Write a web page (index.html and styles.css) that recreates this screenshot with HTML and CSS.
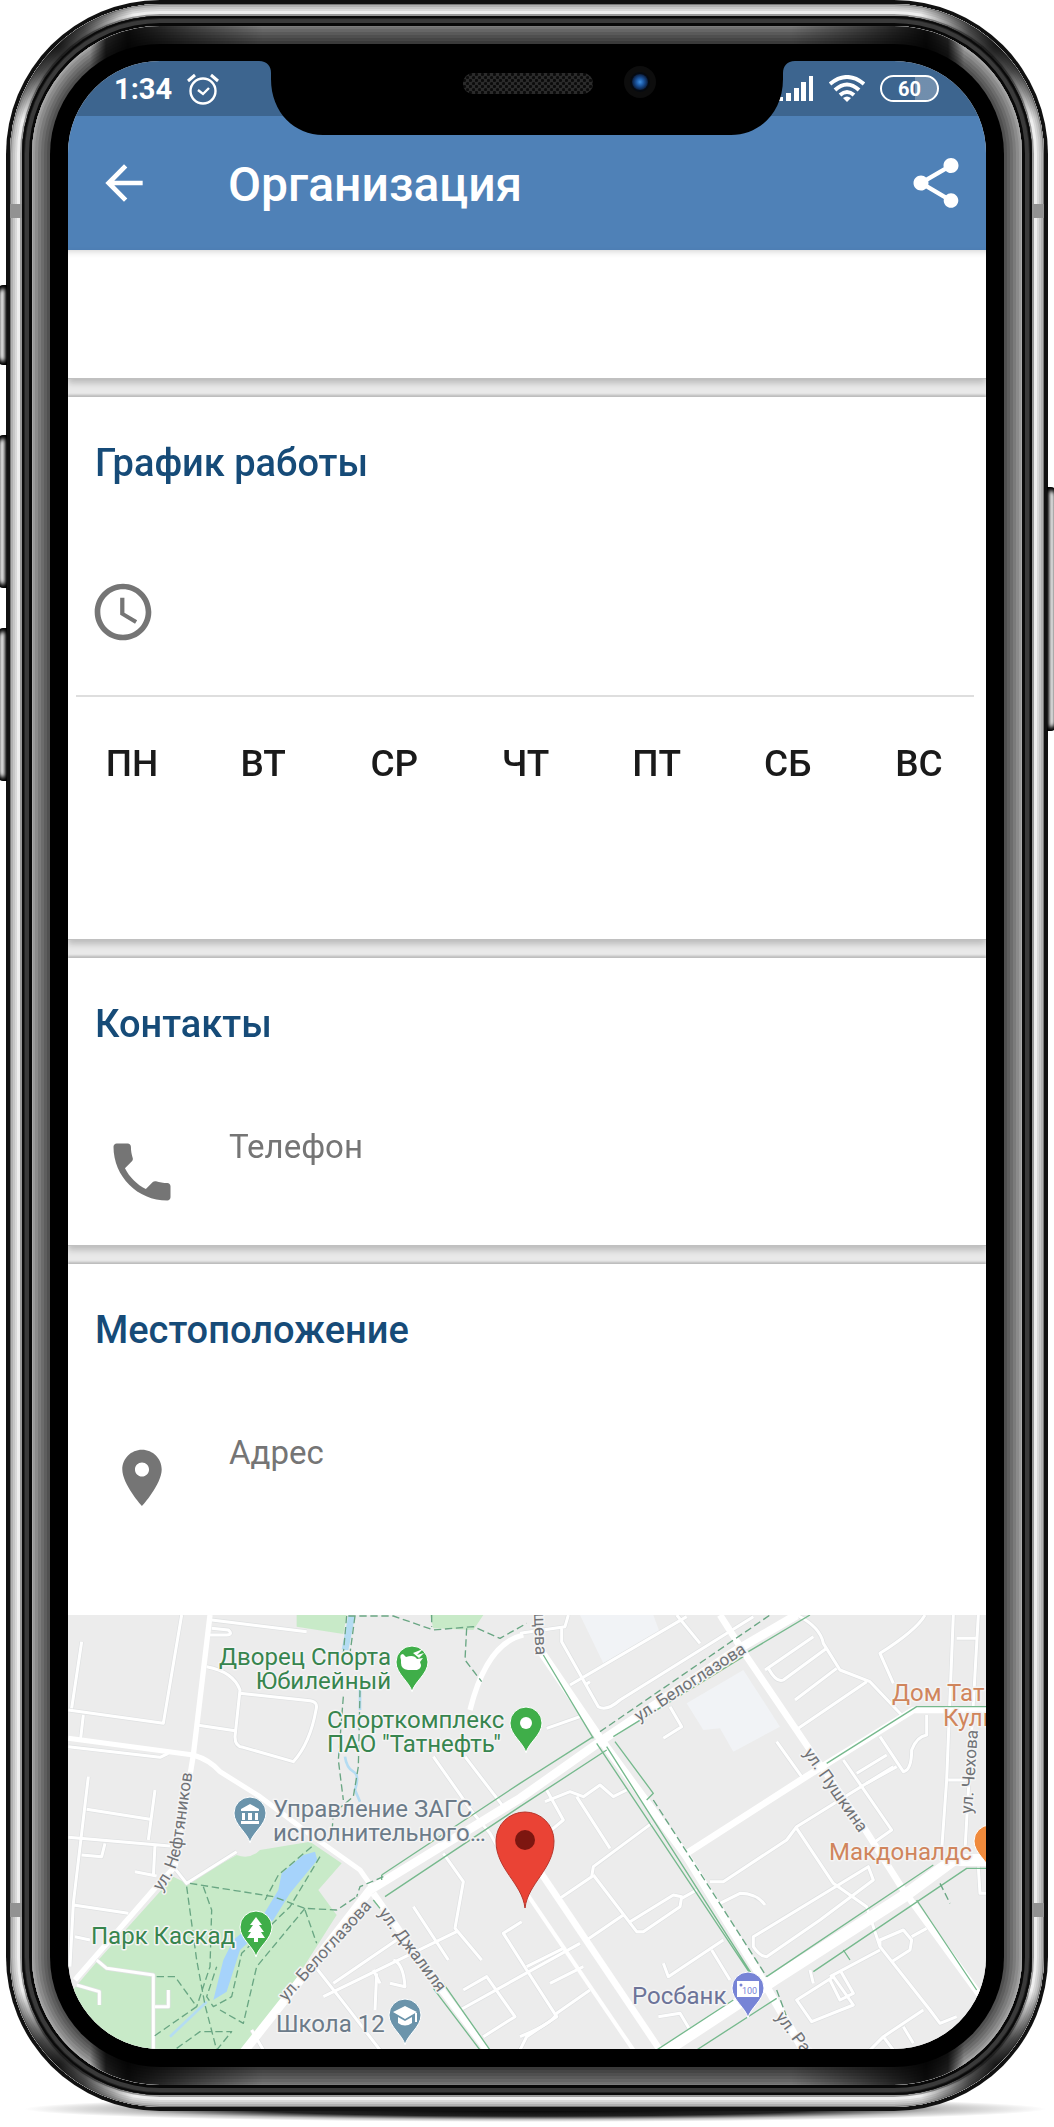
FILE: index.html
```html
<!DOCTYPE html>
<html lang="ru">
<head>
<meta charset="utf-8">
<meta name="viewport" content="width=device-width, initial-scale=1">
<title>Организация</title>
<link rel="stylesheet" href="styles.css">
</head>
<body>
<div class="stage">
  <div class="phone">
    <i class="key key-mute"></i><i class="key key-up"></i><i class="key key-down"></i><i class="key key-power"></i>
    <div class="steel">
      <i class="band band-tl"></i><i class="band band-tr"></i><i class="band band-bl"></i><i class="band band-br"></i>
      <div class="groove"><div class="rim"><div class="bezel">
        <main class="screen">
          <svg class="notch" viewBox="0 0 536 74" aria-hidden="true">
            <defs>
              <pattern id="mesh" width="6" height="6" patternUnits="userSpaceOnUse"><rect width="6" height="6" fill="#2b2b2b"/><circle cx="1.5" cy="1.5" r="1.6" fill="#0b0b0b"/><circle cx="4.500" cy="4.500" r="1.6" fill="#0b0b0b"/></pattern>
              <radialGradient id="lens"><stop offset="0" stop-color="#3f8fe0"/><stop offset=".45" stop-color="#1c58a4"/><stop offset="1" stop-color="#0a1c3c"/></radialGradient>
            </defs>
            <path d="M0 0C8 0 12 5 12 12V18C12 52 36 74 64 74H472C500 74 524 52 524 18V12C524 5 528 0 536 0Z"/>
            <rect x="204" y="12" width="130" height="21" rx="10" fill="url(#mesh)"/>
            <circle cx="381" cy="21" r="16" fill="#0d0d0d"/><circle cx="381" cy="21" r="10" fill="#050a12"/><circle cx="381" cy="21" r="8" fill="url(#lens)"/>
          </svg>
          <div class="status">
            <div class="status-side">
              <time>1:34</time>
              <svg width="32" height="32" viewBox="0 0 32 32" fill="none" stroke="#fff" aria-hidden="true"><circle cx="16" cy="18" r="12.500" stroke-width="2.400"/><path d="M11 17l5 4 6-6" stroke-width="2.400"/><path d="M1 8l7-6M31 8l-7-6" stroke-width="3"/></svg>
            </div>
            <div class="status-side">
              <svg width="36" height="26" viewBox="0 0 36 26" fill="#fff" aria-hidden="true"><path d="M0 21h5v4H0zM8 17h5v8H8zM16 12h5v13h-5zM23 6h5v19h-5zM31 0h4v25h-4z"/></svg>
              <svg width="36" height="27" viewBox="0 0 36 27" fill="none" stroke="#fff" stroke-width="4" aria-hidden="true"><path d="M1 9Q18-5 35 9M6 15Q18 4 30 15M11 20Q18 14 25 20"/><path d="M14 23Q18 20 22 23L18 27Z" fill="#fff" stroke="none"/></svg>
              <span class="battery">60</span>
            </div>
          </div>
          <header class="appbar">
            <button class="icon-btn" type="button" aria-label="Назад"><svg width="56" height="56" viewBox="0 0 24 24"><path d="M20 11H7.830l5.590-5.590L12 4l-8 8 8 8 1.410-1.410L7.830 13H20v-2z"/></svg></button>
            <h1>Организация</h1>
            <button class="icon-btn" type="button" aria-label="Поделиться"><svg width="60" height="60" viewBox="0 0 24 24"><path d="M18 16.080c-.76 0-1.440.3-1.960.77L8.910 12.700c.05-.23.09-.46.09-.7s-.04-.47-.09-.7l7.050-4.110c.54.5 1.250.81 2.040.81 1.660 0 3-1.340 3-3s-1.340-3-3-3-3 1.340-3 3c0 .24.04.47.09.7L8.040 9.810C7.500 9.310 6.790 9 6 9c-1.660 0-3 1.340-3 3s1.340 3 3 3c.79 0 1.500-.31 2.040-.81l7.120 4.160c-.05.21-.08.43-.08.65 0 1.610 1.310 2.920 2.920 2.920s2.920-1.310 2.920-2.920-1.310-2.920-2.920-2.920z"/></svg></button>
          </header>
          <section class="card summary"></section>
          <section class="card schedule">
            <h2>График работы</h2>
            <svg class="clock" width="68" height="68" viewBox="0 0 24 24" aria-hidden="true"><path d="M11.990 2C6.470 2 2 6.480 2 12s4.470 10 9.990 10C17.520 22 22 17.520 22 12S17.520 2 11.990 2zM12 20c-4.420 0-8-3.580-8-8s3.580-8 8-8 8 3.580 8 8-3.580 8-8 8zM12.500 7H11v6l5.250 3.150.75-1.230-4.500-2.670z"/></svg>
            <hr>
            <table class="days"><thead><tr><th scope="col">ПН</th><th scope="col">ВТ</th><th scope="col">СР</th><th scope="col">ЧТ</th><th scope="col">ПТ</th><th scope="col">СБ</th><th scope="col">ВС</th></tr></thead></table>
          </section>
          <section class="card">
            <h2>Контакты</h2>
            <div class="row">
              <svg width="76" height="76" viewBox="0 0 24 24" aria-hidden="true"><path d="M6.620 10.790c1.440 2.830 3.760 5.140 6.590 6.590l2.200-2.200c.27-.27.67-.36 1.020-.24 1.120.37 2.330.57 3.570.57.55 0 1 .45 1 1V20c0 .55-.45 1-1 1-9.390 0-17-7.610-17-17 0-.55.45-1 1-1h3.500c.55 0 1 .45 1 1 0 1.250.2 2.450.57 3.570.11.35.03.74-.25 1.020l-2.200 2.200z"/></svg>
              <p>Телефон</p>
            </div>
          </section>
          <section class="card location">
            <h2>Местоположение</h2>
            <div class="row">
              <svg width="76" height="76" viewBox="-1.500 -1.500 27 27" aria-hidden="true"><path d="M12 2C8.130 2 5 5.130 5 9c0 5.250 7 13 7 13s7-7.750 7-13c0-3.870-3.130-7-7-7zm0 9.500c-1.380 0-2.500-1.120-2.500-2.500s1.120-2.500 2.500-2.500 2.500 1.120 2.500 2.500-1.120 2.500-2.500 2.500z"/></svg>
              <p>Адрес</p>
            </div>
          </section>
          <svg class="map" viewBox="0 0 918 434" preserveAspectRatio="xMidYMid slice" role="img" aria-label="Карта">
            <defs>
              <path id="pin" d="M0 0C-2-10-16-18-16-30A16 16 0 1 1 16-30C16-18 2-10 0 0Z"/>
              <path id="neft" d="M93 277Q110 256 114 230L124 160"/>
              <g id="minor">
                <path d="M65 125L35 325M25 330L310 370L365 45M70 345L62 415M25 440L300 472L325 460M455 60L740 95M445 105H500Q520 103 505 90L455 85M440 200Q520 215 540 270L525 410Q525 440 550 442L700 485Q750 430 768 330Q775 305 750 302L540 280M410 375L525 392M85 530L40 910L30 1100M285 570L265 720M80 628L270 658M25 712L330 738M65 765L125 770L135 730M285 735L280 830M225 815L290 828M40 915L205 940M45 1010L90 1020M340 800L380 850L530 755M110 1080L140 1105L280 1125V1350M285 1220H325V1170M50 1155L118 1175V1215"/>
                <path d="M1120 470L1240 640L1290 700L1340 790M1215 470L1330 620M1150 760L1210 845L1185 985L1265 1080M1060 920L1165 1080M820 1150L1010 1020M790 1190L1190 995M750 1080L860 1220L960 1350M940 1110L960 1150M1000 1080Q1030 1090 1035 1160L990 1150M950 1120L945 1230M575 1290L610 1350M1385 965L1330 1000L1400 1110L1490 1250L1400 1310L1380 1350M1210 1170L1280 1130L1365 1250L1270 1310M1200 1230L1560 1030"/>
                <g transform="translate(1380 0)">
                  <path d="M0 100L135 80L145 45M125 80V125L235 320Q260 335 300 300L700 50M150 255L500 50M210 245L195 255M470 45L540 130M80 385L180 350M450 320L485 380L430 415M770 425L845 530M735 210L880 110M920 145L790 240Q770 250 745 205M950 205L825 300M1040 245L835 385M830 45Q900 80 910 130L960 210L1050 245L1150 350M970 480L1115 690L1065 725M1080 410L1150 515Q1175 510 1175 450Q1190 410 1220 405V345M1010 520L1100 465M1040 550L1130 500M1215 45Q1190 90 1080 160L1120 250M1300 45L1280 540L1265 750M1375 45L1335 750M1310 115H1370M1285 540H1340M1375 800L1380 880H1400"/>
                  <path d="M80 570L130 660L70 710M75 605L150 575L190 590L240 555L280 590L320 570M170 590L270 745M395 670L220 800L215 830L120 895M220 825L350 995H370L480 920L485 890L460 885L330 965M200 1020L310 945M485 895L530 870M600 910L660 880Q710 880 735 915M830 685L940 850L1040 920L1080 1040L1230 1230L1260 1270L1310 1250M700 1010L1045 800L1060 840L900 960L740 1070Q720 1070 700 1040ZM430 1090L445 1130L610 1020M575 1050L630 1140M570 845H610L800 720L830 680L1120 500M870 1110L880 1150M830 1200L940 1130L1000 1215L875 1265ZM930 1130L1080 1050M960 1110L1000 1180L960 1200L930 1140M1080 1040L1080 1020L1150 990L1175 1020L1170 1050L1115 1085M1175 1010L1220 985M1050 1350L1090 1310L1210 1230M1090 1310L1120 1350M1150 1280L1180 1330M415 1250L480 1240L510 1290"/>
                  <path d="M20 1100L130 1045M90 1150L190 1100M0 1310Q100 1270 110 1240L210 1170"/>
                </g>
              </g>
              <g id="major">
                <path d="M25 415L400 465Q450 480 480 515L600 590L760 710L900 810L935 860" stroke-width="15"/>
                <path d="M450 45L400 465L345 800L280 870L45 1140" stroke-width="16"/>
                <path d="M1230 330Q1280 130 1390 105" stroke-width="16"/>
                <path d="M540 1370L690 1180L930 870L1380 595L1620 425L2030 150L2210 45" stroke-width="26"/>
                <path d="M940 880L1130 1150L1280 1350" stroke-width="20"/>
                <g transform="translate(1380 0)">
                  <path d="M60 150L240 415L500 770L710 1110L850 1350" stroke-width="24"/>
                  <path d="M600 45L680 170L870 450L1030 680L1150 870L1390 1200" stroke-width="20"/>
                  <path d="M500 760L850 535L1180 330H1400" stroke-width="20"/>
                  <path d="M50 800L420 1350" stroke-width="20"/><path d="M20 880L340 1350" stroke-width="12"/>
                  <path d="M410 1370L760 1140L1150 890L1300 780H1400" stroke-width="36"/>
                </g>
              </g>
            </defs>
            <rect width="918" height="434" fill="#ececec"/>
            <g transform="translate(-8 -15) scale(.333333)" fill="none" stroke-linejoin="round">
              <path fill="#f1f3f6" d="M1560 45H1780L1800 100L1630 190ZM1880 310L2050 210L2160 380L2020 455L1980 385L1930 390Z"/>
              <path fill="#c8eac8" d="M530 765Q570 780 600 750L750 725L845 790L775 870L830 945L560 1370H100L30 1180L115 1080L340 830L380 850ZM710 45H860L850 102L710 80ZM1110 45H1270L1240 90L1120 85Z"/>
              <path fill="#a6d3fb" d="M765 755L772 780L690 880L640 960L540 1050L500 1175L460 1200L490 1080L520 1020L610 945L655 870L665 820L730 765Z"/>
              <path stroke="#b4dcf2" stroke-width="20" d="M875 48L855 150"/><path stroke="#b4dcf2" stroke-width="8" d="M900 270V330M855 470Q860 505 880 515T885 570L900 605M440 1205L330 1310"/>
              <use href="#minor" stroke="#dfe1e2" stroke-width="13"/><use href="#minor" stroke="#fff" stroke-width="9"/>
              <use href="#major" stroke="#fff"/>
              <g stroke="#76b98d" stroke-width="4">
                <path d="M965 825L1380 550L1600 410M975 890L1380 620L1640 450M1450 165L1600 415M1640 440L2080 1130M1610 430L2070 1120M1665 425L1780 580L1760 600M1660 410L2050 170M2065 155L2250 45M2300 490L2570 320H2780M2120 1130L2620 795M1790 1350L2020 1200M2260 1115L2720 805H2780M1910 1350L2150 1195M2570 900L2750 1170M2350 1050L2370 1080"/>
                <path d="M965 825V840M1120 1165L1260 1350M1150 1150L1290 1350M940 900L960 925" />
              </g>
              <g stroke="#69a683" stroke-width="4" stroke-dasharray="22 11">
                <path d="M860 48L850 160M885 48L870 160M850 290L835 480L850 600M900 270L895 500L880 590L820 640L815 710M865 48H1000L1120 90L1240 80L1320 115L1400 70M1220 85L1215 180L1265 245M1115 45V80M390 850L640 890L735 925L830 930L890 890M380 860L410 1080L435 1215L470 1350M430 860L455 930L450 1100L410 1220M755 740L655 825L615 900M780 770L690 920L545 1060L515 1190L460 1220L440 1190L470 1100M735 925L590 1100L550 1270L480 1230M735 930L770 1030M290 1130H345L410 1220L280 1310M350 1345L420 1295H515L470 1350M970 830L900 860L890 890"/>
                <path d="M1620 395L2130 45M1780 600L2120 1130M2150 1170L2180 1250M2640 850L2670 910"/>
              </g>
            </g>
            <g class="streets">
              <text><textPath href="#neft">ул. Нефтяников</textPath></text>
              <text transform="translate(218 387) rotate(-48)">ул. Белоглазова</text>
              <text transform="translate(571 107) rotate(-33)">ул. Белоглазова</text>
              <text transform="translate(310 298) rotate(53)">ул. Джалиля</text>
              <text transform="translate(735 138) rotate(55)">ул. Пушкина</text>
              <text transform="translate(904 199) rotate(-86)">ул. Чехова</text>
              <text transform="translate(707 402) rotate(53)">ул. Рахимова</text>
              <text transform="translate(466 -2) rotate(88)">щева</text>
            </g>
            <g class="places">
              <g fill="#37854e">
                <text x="323" y="50" text-anchor="end">Дворец Спорта</text><text x="323" y="74" text-anchor="end">Юбилейный</text>
                <text x="259" y="113">Спорткомплекс</text><text x="259" y="137">ПАО "Татнефть"</text>
                <text x="23" y="329">Парк Каскад</text>
              </g>
              <g fill="#6c7b89">
                <text x="205" y="202">Управление ЗАГС</text><text x="205" y="226">исполнительного…</text><text x="208" y="417">Школа 12</text>
              </g>
              <text x="564" y="389" fill="#6d7499">Росбанк</text>
              <g fill="#d0855c"><text x="824" y="86">Дом Тат</text><text x="875" y="111">Куль</text><text x="761" y="245">Макдоналдс</text></g>
            </g>
            <g stroke="#fff" stroke-width="1">
              <use href="#pin" x="344" y="77" fill="#3fae49"/><use href="#pin" x="458" y="138" fill="#3fae49"/><use href="#pin" x="188" y="342" fill="#3fae49"/>
              <use href="#pin" x="182" y="228" fill="#6b94ab"/><use href="#pin" x="337" y="430" fill="#6b94ab"/><use href="#pin" x="680" y="403" fill="#7784d6"/><use href="#pin" x="922" y="256" fill="#f08a3c"/>
            </g>
            <g fill="#fff">
              <circle cx="458" cy="108" r="6"/>
              <path d="M188 302l6 8h-3l5 7h-3l4 6h-7v4h-4v-4h-7l4-6h-3l5-7h-3z"/>
              <path d="M182 189l9 5v2h-18v-2zM174 198h3v7h-3zM180 198h4v7h-4zM187 198h3v7h-3zM173 206h18v3h-18z"/>
              <path d="M337 391l12 6-12 7-12-7zM330 402l7 4 7-4v6q-7 5-14 0zM347 398h2v9h-2z"/>
              <path d="M333 45q-2-6 2-6l3 3q8-3 11 2l6-1-3 4q3 6-3 8h-9q-7-1-7-7zM345 38l10-4-6 6 7-2-5 5z"/>
              <path d="M669 366h22v16h-22z"/><path d="M921 218h3v8q3 0 3-8h2v20h-3v-10q-5 0-5-10z"/>
            </g>
            <circle cx="673" cy="370" r="1.500" fill="#7784d6"/><text x="674" y="379" class="cash">100</text>
            <path d="M457 293C454 268 428 254 428 226A29 29 0 1 1 486 226C486 254 460 268 457 293Z" fill="#ea4335" stroke="#b8352b" stroke-width="1"/><circle cx="457" cy="225" r="10" fill="#7d1610"/>
          </svg>
        </main>
      </div></div></div>
    </div>
  </div>
</div>
</body>
</html>
```
FILE: styles.css
```css
* { box-sizing: border-box; }
body { margin: 0; background: #fff; font-family: Roboto, "Liberation Sans", sans-serif; }
h1, h2, p { margin: 0; font-weight: 500; }
.stage { position: relative; padding: 0 6px 20px; overflow: hidden; }
.stage::before { content: ""; position: absolute; left: 24px; right: 8px; bottom: 9px; height: 26px; border-radius: 50%; background: radial-gradient(closest-side, #000 0, #222 55%, #8888 80%, transparent); }

/* Phone body: concentric rings from the outer edge to the glass */
.phone { position: relative; padding: 4px; border-radius: 154px; background: #111; }
.steel { position: relative; padding: 12px; border-radius: 150px; overflow: hidden; background: #ddd;
  box-shadow: inset 0 0 0 1px #777, inset 0 0 0 3px #b0b0b0, inset 0 0 0 5px #c6c6c6, inset 0 0 0 7px #d8d8d8, inset 0 0 0 10px #eee, inset 0 0 0 12px #999; }
.steel::before { content: ""; position: absolute; inset: 0; border-radius: 150px;
  background:
    radial-gradient(circle at 48px 42px, #000d 0, #000a 30px, transparent 82px),
    radial-gradient(circle at calc(100% - 48px) 42px, #000d 0, #000a 30px, transparent 82px),
    radial-gradient(circle at 48px calc(100% - 42px), #000d 0, #000a 30px, transparent 82px),
    radial-gradient(circle at calc(100% - 48px) calc(100% - 42px), #000d 0, #000a 30px, transparent 82px); }
.groove { position: relative; padding: 10px; border-radius: 138px; background: #303030; box-shadow: inset 0 0 0 2px #0a0a0a, inset 0 0 0 3px #222, inset 0 0 0 7px #3a3a3a, inset 0 0 0 10px #080808; }
.rim { --cap: linear-gradient(90deg, transparent 58px, #000c 74px, #000e 96px, #0009 160px, #0004 230px, #0004 calc(100% - 230px), #0009 calc(100% - 160px), #000e calc(100% - 96px), #000c calc(100% - 74px), transparent calc(100% - 58px));
  position: relative; padding: 18px; border-radius: 128px; overflow: hidden; background: #555;
  box-shadow: inset 0 0 0 1px #aaa, inset 0 0 0 3px #9a9a9a, inset 0 0 0 6px #8b8b8b, inset 0 0 0 9px #7b7b7b, inset 0 0 0 12px #6c6c6c, inset 0 0 0 15px #5e5e5e, inset 0 0 0 18px #505050; }
.rim::before { content: ""; position: absolute; inset: 0; border-radius: 128px; background: var(--cap) 0 0 / 100% 64px no-repeat, var(--cap) 0 100% / 100% 64px no-repeat; }
.bezel { position: relative; padding: 17px 18px 18px; border-radius: 110px; background: #000; }
.key { position: absolute; left: -8px; width: 9px; border-radius: 5px 0 0 5px; background: linear-gradient(90deg, #666, #ddd 45%, #aaa 65%, #111); box-shadow: inset 0 6px 4px -2px #000, inset 0 -6px 4px -2px #000; }
.key-mute { top: 285px; height: 80px; }
.key-up { top: 435px; height: 153px; }
.key-down { top: 628px; height: 153px; }
.key-power { left: auto; right: -8px; top: 487px; height: 244px; transform: rotate(180deg); }
.band { position: absolute; width: 12px; height: 14px; background: #929292; }
.band-tl, .band-tr { top: 200px; }
.band-bl, .band-br { bottom: 190px; }
.band-tl, .band-bl { left: 0; }
.band-tr, .band-br { right: 0; }

.notch { position: absolute; top: 0; left: 50%; width: 536px; height: 74px; transform: translateX(-50%); z-index: 1; }

/* App */
.screen { position: relative; overflow: hidden; border-radius: 92px; background: #e9e9e9; }
.status { display: flex; justify-content: space-between; align-items: center; height: 55px; padding: 0 47px 0 46px; background: #3d658f; color: #fff; }
.status-side { display: flex; align-items: center; gap: 15px; }
.status time { font-size: 29px; font-weight: 700; line-height: 32px; }
.battery { width: 59px; height: 27px; border: 2px solid #fff; border-radius: 14px; font-size: 20px; font-weight: 700; line-height: 24px; text-align: center; background: linear-gradient(90deg, transparent 60%, #fff4 60%); }
.appbar { display: flex; align-items: center; height: 134px; padding: 0 20px 0 28px; background: #4f81b7; color: #fff; }
.appbar h1 { flex: 1; margin-left: 76px; padding-top: 4px; font-size: 48px; line-height: 56px; }
.icon-btn { display: block; padding: 0; border: 0; background: none; }
.icon-btn svg { display: block; fill: #fff; }
.card { padding: 42px 0 0; background: #fff; }
.card + .card { margin-top: 18px; box-shadow: 0 -2px 2px #bbb; }
.summary { height: 129px; box-shadow: inset 0 7px 7px -6px #0003; }
.summary, .schedule, .schedule + .card { border-bottom: 1px solid #c0c0c0; filter: drop-shadow(0 4px 3px #0003); }
.card h2 { padding-left: 27px; font-size: 38px; line-height: 48px; color: #164b78; }
.card svg { fill: #757575; }
.schedule { height: 543px; }
.clock { display: block; margin: 91px 0 49px 21px; }
.card hr { margin: 0 12px 0 8px; border: 0; border-top: 2px solid #dedede; }
.days { width: 100%; margin-top: 43px; border-collapse: collapse; table-layout: fixed; }
.days th { padding: 0 3px 0 0; font-size: 37px; font-weight: 500; line-height: 48px; color: #1a1a1a; }
.row { display: flex; padding: 79px 0 35px 36px; gap: 49px; }
.row svg { margin-top: 7px; }
.row p { font-size: 33px; font-weight: 400; line-height: 40px; color: #757575; }
.location { padding-bottom: 64px; }
.map { display: block; width: 100%; height: 434px; }
.map text { font-family: Roboto, "Liberation Sans", sans-serif; paint-order: stroke; stroke: #f4f4f4; stroke-width: 3px; stroke-linejoin: round; }
.places { font-size: 24px; }
.streets { font-size: 17px; fill: #707276; }
.map .cash { font-size: 9px; fill: #7784d6; stroke: none; }
```
